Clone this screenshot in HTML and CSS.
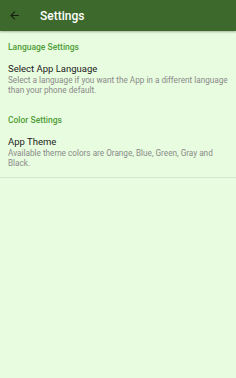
FILE: index.html
```html
<!DOCTYPE html>
<html lang="en">
<head>
    <meta charset="UTF-8">
    <meta name="viewport" content="width=device-width, initial-scale=1.0">
    <title>Settings</title>
    <link rel="stylesheet" href="styles.css">
</head>
<body>

    <div class="toolbar">
        <svg class="back" width="13" height="13" viewBox="0 0 24 24">
            <path d="M20 11H7.83l5.59-5.59L12 4l-8 8 8 8 1.41-1.41L7.83 13H20v-2z" fill="#142010"/>
        </svg>
        <span class="title">Settings</span>
    </div>

    <div class="category">Language Settings</div>
    <div class="pref">
        <div class="pref-title">Select App Language</div>
        <div class="pref-summary">Select a language if you want the App in a different language than your phone default.</div>
    </div>

    <div class="category">Color Settings</div>
    <div class="pref last">
        <div class="pref-title">App Theme</div>
        <div class="pref-summary">Available theme colors are Orange, Blue, Green, Gray and Black.</div>
    </div>

</body>
</html>
```

FILE: styles.css
```css
body {
    margin: 0;
    font-family: Roboto, "Noto Sans", sans-serif;
    background-color: #e8fcdf;
    min-height: 378px;
}
.toolbar {
    height: 31px;
    background-color: #3d6a2c;
    display: flex;
    align-items: center;
    padding-left: 8px;
    box-shadow: 0 1px 2px rgba(0, 0, 0, 0.3);
}
.back {
    display: block;
}
.title {
    margin-left: 19px;
    color: #ffffff;
    font-size: 12px;
    font-weight: 500;
}
.category {
    padding: 10px 8px 0 8px;
    height: 19px;
    line-height: 12px;
    font-size: 8.5px;
    font-weight: 500;
    color: #4f9d37;
}
.pref {
    padding: 2px 8px 9px 8px;
}
.pref-title {
    font-size: 9.5px;
    line-height: 13px;
    color: #222222;
}
.pref-summary {
    font-size: 8.2px;
    line-height: 10px;
    color: #8a8a8a;
}
.last {
    border-bottom: 1px solid #d6e6cf;
}
```
